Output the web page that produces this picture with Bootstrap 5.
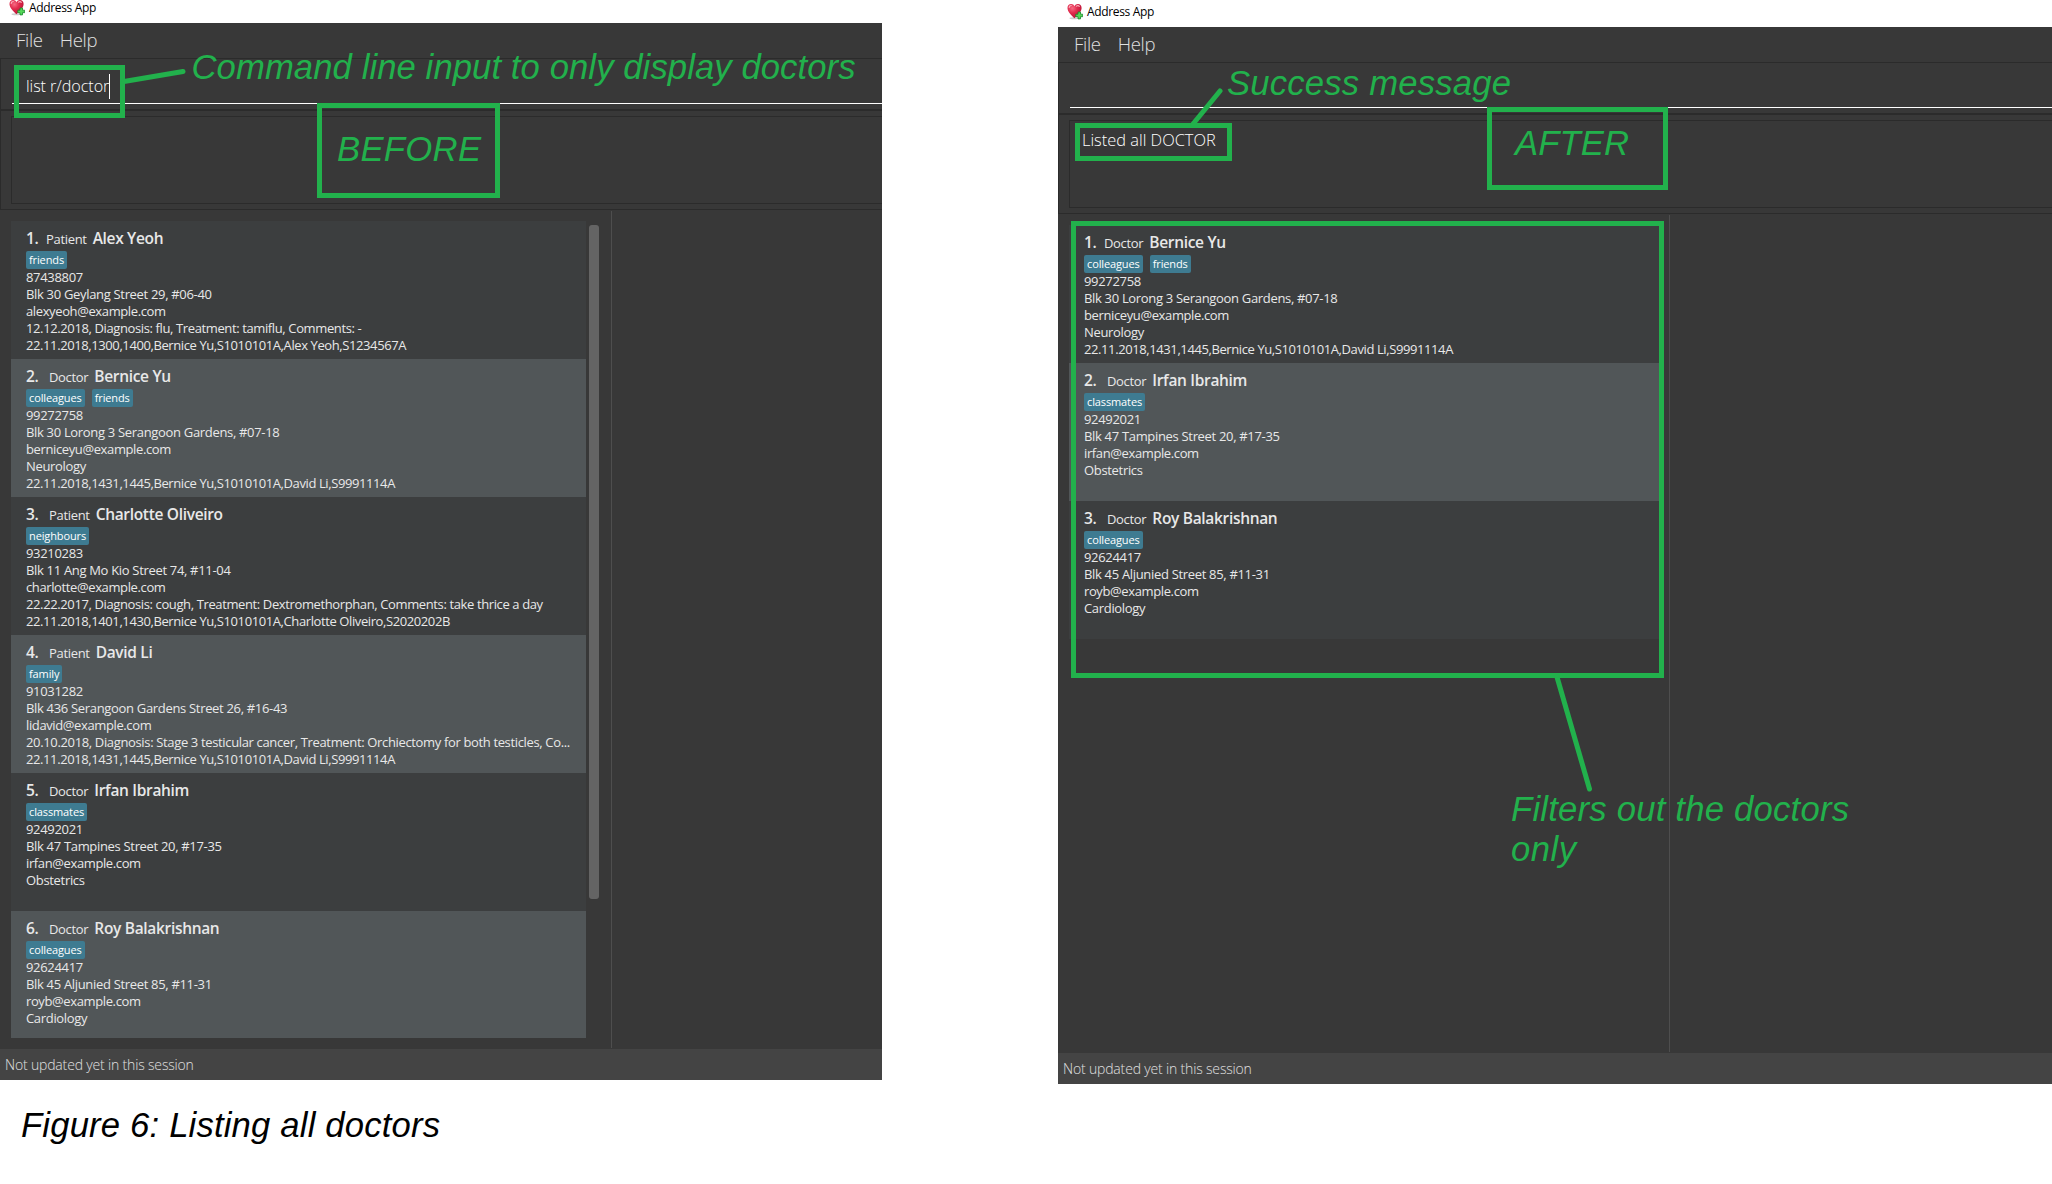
<!DOCTYPE html>
<html lang="en">
<head>
<meta charset="utf-8">
<title>Address App</title>
<link rel="stylesheet" href="https://cdn.jsdelivr.net/npm/bootstrap@5.3.0/dist/css/bootstrap.min.css">
<style>
body{width:2052px;height:1184px;overflow:hidden;background:#fff;font-family:"Open Sans","Noto Sans",sans-serif;color:#000}
.stage{width:2052px;height:1184px}
.app-win{width:882px;height:1080px}
.app-win.after{width:994px;height:1084px}
.title-strip{height:23px;padding:0 0 0 9px;font-size:12px;letter-spacing:-.35px;gap:4px}
.title-strip svg{width:16px;height:17px;margin-top:-1px}
.title-strip span{line-height:16px}
.after .title-strip{height:27px;padding-top:4px}
.app-body{background:#383838;color:#e4e4e4}
.menu-strip{height:35px;padding-left:16px;gap:17px;font-size:18.5px;font-weight:300;letter-spacing:-.3px;line-height:34px;color:#e0e0e0}
.cmd-pane{height:52px;border:1px solid #2b2b2b;border-right:0;padding:13px 0 5px 11px}
.cmd-field{height:32px;border-bottom:1px solid #fff;padding:2px 0 0 14px;font-size:16.2px;font-weight:300;line-height:24px;letter-spacing:-.08px;color:#fff}
.caret{width:1px;height:25px;background:#fff}
.result-pane{height:100px;border:1px solid #2b2b2b;border-right:0;padding:5px 0 5px 10px}
.result-box{height:88px;border:1px solid #2b2b2b;border-right:0;padding:7px 0 0 12px;font-size:16.4px;font-weight:300;line-height:24px;color:#fff}
.main-split{padding-bottom:1px}
.list-pane{width:612px;padding:10px 8px 10px 11px;border-right:1px solid #4e4e4e;margin-top:1px}
.people{width:575px;height:817px;overflow:hidden}
.after .people{width:592px}
.person{height:138px;padding:6px 14px 0 15px;background:#3c3e3f;font-size:13px;line-height:17px;letter-spacing:-.32px;color:#e8e8e8}
.person:nth-child(even){background:#515658}
.head-line{height:24px;gap:6px;line-height:23px;align-items:baseline}
.head-line b{font-size:15.5px;font-weight:600}
.head-line .num{width:17px}
.person:first-child .num{width:14px}
.tags{gap:7px;height:18px}
.tag{height:18px;padding:0 3px;border-radius:2px;background:#3e7b91;color:#fff;font-size:11px;line-height:18px;letter-spacing:-.12px}
.mail{letter-spacing:-.38px}
.diag{letter-spacing:-.38px}
.diag.long{letter-spacing:-.35px}
.appt{letter-spacing:-.4px}
.thumb{width:10px;height:674px;margin:4px 0 0 3px;border-radius:3px;background:#646464}
.status-strip{height:31px;background:#444;padding-left:5px;font-size:14px;font-weight:300;letter-spacing:-.17px;line-height:31px;color:#e0e0e0}
.notes text{font-family:"Liberation Sans",Arial,sans-serif;font-style:italic;font-size:34.67px}
</style>
</head>
<body>
<svg width="0" height="0" class="position-absolute">
  <defs>
    <radialGradient id="hg" cx=".35" cy=".3" r=".75"><stop offset="0" stop-color="#f66a82"/><stop offset=".45" stop-color="#e02a4c"/><stop offset="1" stop-color="#b81236"/></radialGradient>
    <symbol id="heart" viewBox="0 0 16 17">
      <ellipse cx="7" cy="15.3" rx="4.5" ry="1" fill="#ccc"/>
      <path d="M7.4 15.2C4 11.8.5 8.600.5 4.900.5 2.600 2.100 1 4.200 1 5.700 1 6.900 1.900 7.500 3.200 8.200 1.900 9.400 1 10.900 1 13 1 14.600 2.600 14.600 4.900 14.600 8.600 10.900 11.800 7.400 15.200z" fill="url(#hg)"/>
      <path d="M2.200 4.500C2.200 3.200 3.100 2.500 4.300 2.500M9.500 3.200C10.200 2.500 11.600 2.400 12.300 3.300" stroke="#fbb0bd" stroke-width="1.100" fill="none" stroke-linecap="round"/>
      <path d="M11 9h2.500v2.200h2.200v2.500h-2.200v2.200H11v-2.200H8.800v-2.500H11z" fill="#55d858" stroke="#16862a" stroke-width=".8"/>
    </symbol>
  </defs>
</svg>
<div class="stage position-relative d-flex justify-content-between align-items-start">

  <section class="app-win d-flex flex-column">
    <header class="title-strip d-flex align-items-start flex-shrink-0"><svg><use href="#heart"/></svg><span>Address App</span></header>
    <div class="app-body flex-grow-1 d-flex flex-column">
      <nav class="menu-strip d-flex"><span>File</span><span>Help</span></nav>
      <div class="cmd-pane"><div class="cmd-field d-flex"><span>list r/doctor</span><i class="caret"></i></div></div>
      <div class="result-pane"><div class="result-box"></div></div>
      <main class="main-split flex-grow-1 d-flex">
        <div class="list-pane d-flex">
          <div class="people">
            <article class="person">
              <div class="head-line d-flex"><b class="num">1.</b><span>Patient</span><b>Alex Yeoh</b></div>
              <div class="tags d-flex"><span class="tag">friends</span></div>
              <div>87438807</div><div>Blk 30 Geylang Street 29, #06-40</div><div class="mail">alexyeoh@example.com</div>
              <div class="diag text-nowrap">12.12.2018, Diagnosis: flu, Treatment: tamiflu, Comments: -</div>
              <div class="appt">22.11.2018,1300,1400,Bernice Yu,S1010101A,Alex Yeoh,S1234567A</div>
            </article>
            <article class="person">
              <div class="head-line d-flex"><b class="num">2.</b><span>Doctor</span><b>Bernice Yu</b></div>
              <div class="tags d-flex"><span class="tag">colleagues</span><span class="tag">friends</span></div>
              <div>99272758</div><div>Blk 30 Lorong 3 Serangoon Gardens, #07-18</div><div class="mail">berniceyu@example.com</div>
              <div>Neurology</div>
              <div class="appt">22.11.2018,1431,1445,Bernice Yu,S1010101A,David Li,S9991114A</div>
            </article>
            <article class="person">
              <div class="head-line d-flex"><b class="num">3.</b><span>Patient</span><b>Charlotte Oliveiro</b></div>
              <div class="tags d-flex"><span class="tag">neighbours</span></div>
              <div>93210283</div><div>Blk 11 Ang Mo Kio Street 74, #11-04</div><div class="mail">charlotte@example.com</div>
              <div class="diag text-nowrap">22.22.2017, Diagnosis: cough, Treatment: Dextromethorphan, Comments: take thrice a day</div>
              <div class="appt">22.11.2018,1401,1430,Bernice Yu,S1010101A,Charlotte Oliveiro,S2020202B</div>
            </article>
            <article class="person">
              <div class="head-line d-flex"><b class="num">4.</b><span>Patient</span><b>David Li</b></div>
              <div class="tags d-flex"><span class="tag">family</span></div>
              <div>91031282</div><div>Blk 436 Serangoon Gardens Street 26, #16-43</div><div class="mail">lidavid@example.com</div>
              <div class="diag long text-nowrap">20.10.2018, Diagnosis: Stage 3 testicular cancer, Treatment: Orchiectomy for both testicles, Co...</div>
              <div class="appt">22.11.2018,1431,1445,Bernice Yu,S1010101A,David Li,S9991114A</div>
            </article>
            <article class="person">
              <div class="head-line d-flex"><b class="num">5.</b><span>Doctor</span><b>Irfan Ibrahim</b></div>
              <div class="tags d-flex"><span class="tag">classmates</span></div>
              <div>92492021</div><div>Blk 47 Tampines Street 20, #17-35</div><div class="mail">irfan@example.com</div>
              <div>Obstetrics</div>
            </article>
            <article class="person">
              <div class="head-line d-flex"><b class="num">6.</b><span>Doctor</span><b>Roy Balakrishnan</b></div>
              <div class="tags d-flex"><span class="tag">colleagues</span></div>
              <div>92624417</div><div>Blk 45 Aljunied Street 85, #11-31</div><div class="mail">royb@example.com</div>
              <div>Cardiology</div>
            </article>
          </div>
          <div class="thumb"></div>
        </div>
      </main>
      <footer class="status-strip">Not updated yet in this session</footer>
    </div>
  </section>

  <section class="app-win after d-flex flex-column">
    <header class="title-strip d-flex align-items-start flex-shrink-0"><svg><use href="#heart"/></svg><span>Address App</span></header>
    <div class="app-body flex-grow-1 d-flex flex-column">
      <nav class="menu-strip d-flex"><span>File</span><span>Help</span></nav>
      <div class="cmd-pane"><div class="cmd-field"></div></div>
      <div class="result-pane"><div class="result-box">Listed all DOCTOR</div></div>
      <main class="main-split flex-grow-1 d-flex">
        <div class="list-pane d-flex">
          <div class="people">
            <article class="person">
              <div class="head-line d-flex"><b class="num">1.</b><span>Doctor</span><b>Bernice Yu</b></div>
              <div class="tags d-flex"><span class="tag">colleagues</span><span class="tag">friends</span></div>
              <div>99272758</div><div>Blk 30 Lorong 3 Serangoon Gardens, #07-18</div><div class="mail">berniceyu@example.com</div>
              <div>Neurology</div>
              <div class="appt">22.11.2018,1431,1445,Bernice Yu,S1010101A,David Li,S9991114A</div>
            </article>
            <article class="person">
              <div class="head-line d-flex"><b class="num">2.</b><span>Doctor</span><b>Irfan Ibrahim</b></div>
              <div class="tags d-flex"><span class="tag">classmates</span></div>
              <div>92492021</div><div>Blk 47 Tampines Street 20, #17-35</div><div class="mail">irfan@example.com</div>
              <div>Obstetrics</div>
            </article>
            <article class="person">
              <div class="head-line d-flex"><b class="num">3.</b><span>Doctor</span><b>Roy Balakrishnan</b></div>
              <div class="tags d-flex"><span class="tag">colleagues</span></div>
              <div>92624417</div><div>Blk 45 Aljunied Street 85, #11-31</div><div class="mail">royb@example.com</div>
              <div>Cardiology</div>
            </article>
          </div>
        </div>
      </main>
      <footer class="status-strip">Not updated yet in this session</footer>
    </div>
  </section>

  <!-- hand-drawn callouts over both windows -->
  <svg class="notes position-absolute top-0 start-0" width="2052" height="1184">
    <g fill="none" stroke="#22b14c" stroke-width="5">
      <rect x="16.500" y="67.500" width="106" height="48"/>
      <rect x="319.500" y="105.500" width="178" height="90"/>
      <rect x="1077.500" y="125.500" width="152" height="33"/>
      <rect x="1489.500" y="109.500" width="176" height="78"/>
      <rect x="1073.500" y="223.500" width="588" height="452"/>
      <path d="M124 81.500 183 71.500M1193 124 1220 91M1557 677 1589.500 789" stroke-linecap="round"/>
    </g>
    <g fill="#22b14c">
      <text x="191.500" y="79" textLength="664">Command line input to only display doctors</text>
      <text x="337" y="161" textLength="144">BEFORE</text>
      <text x="1227" y="95" textLength="284">Success message</text>
      <text x="1515" y="155" textLength="114">AFTER</text>
      <text x="1511" y="821" textLength="338">Filters out the doctors</text>
      <text x="1511" y="861" textLength="65">only</text>
    </g>
    <text x="21" y="1137" textLength="419">Figure 6: Listing all doctors</text>
  </svg>
</div>
<script src="https://cdn.jsdelivr.net/npm/bootstrap@5.3.0/dist/js/bootstrap.bundle.min.js"></script>
</body>
</html>
